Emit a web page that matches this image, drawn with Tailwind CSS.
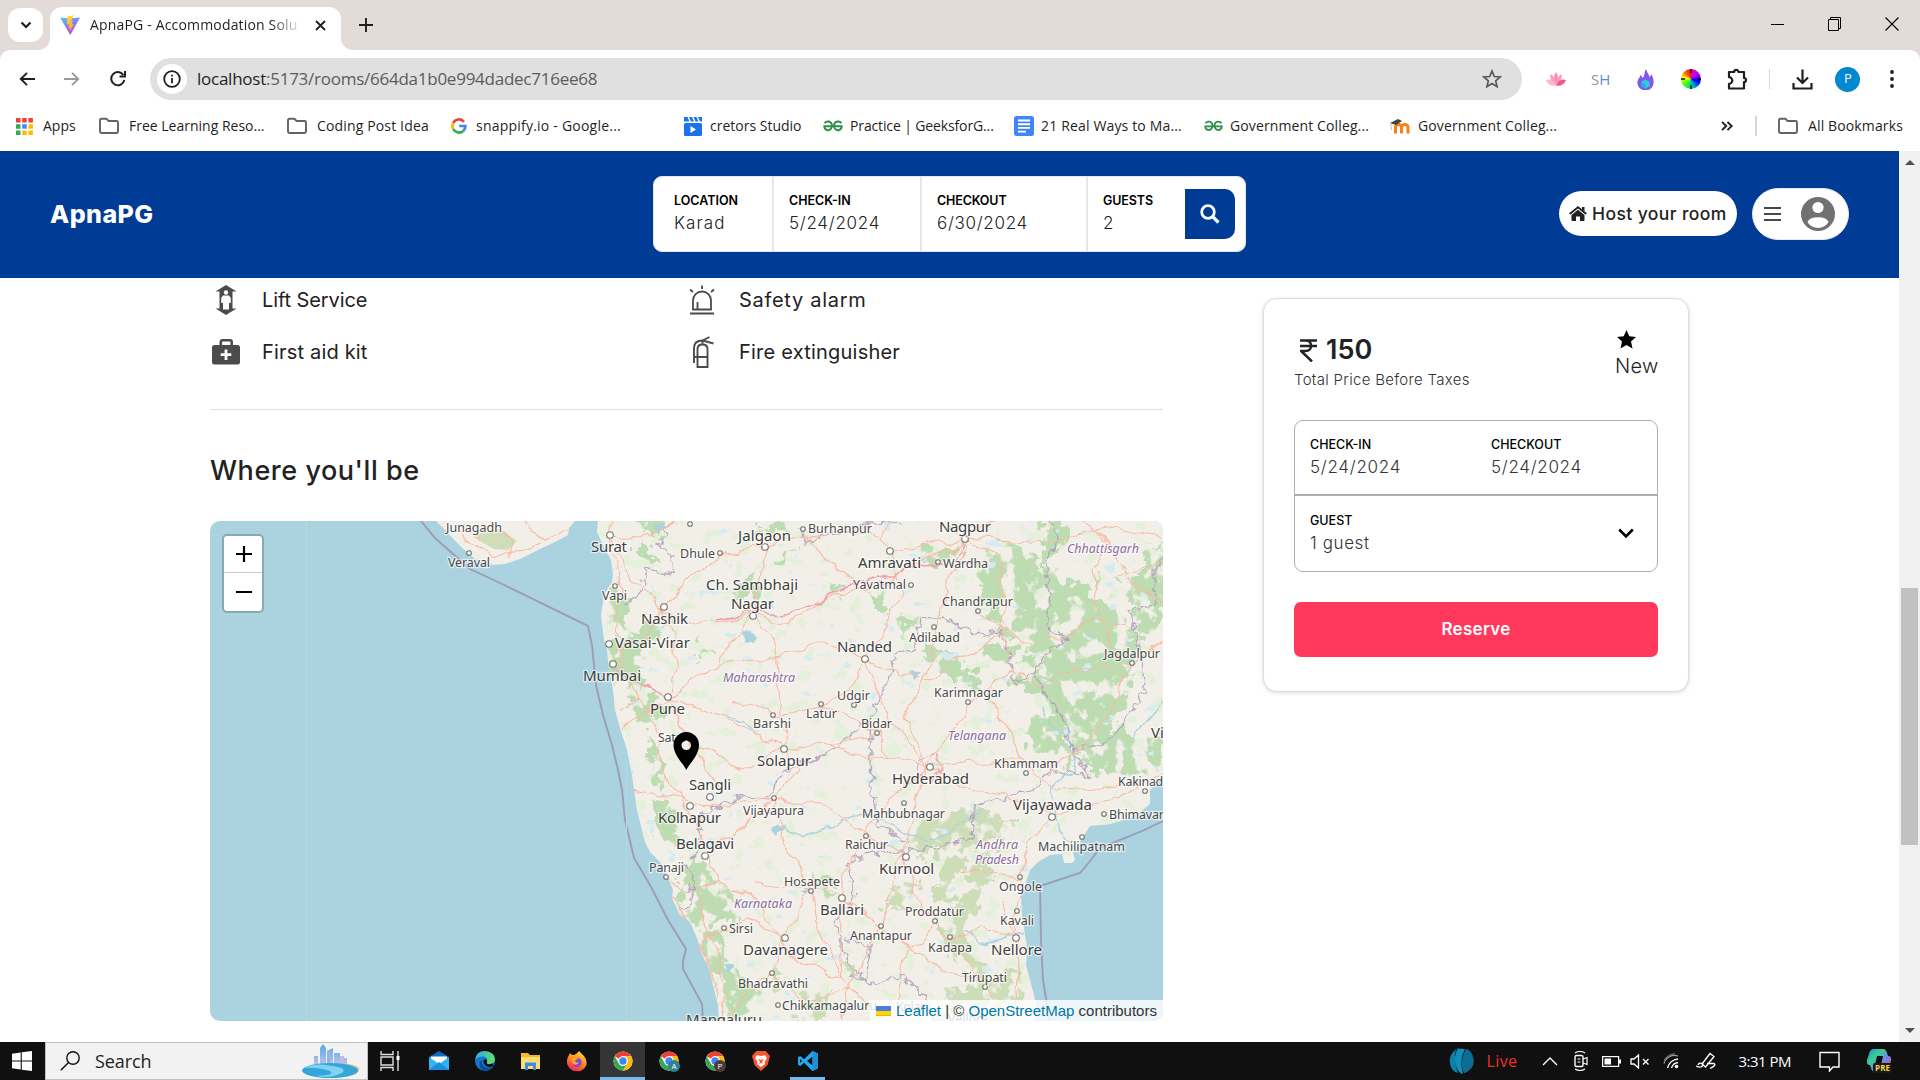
<!DOCTYPE html>
<html lang="en">
<head>
<meta charset="utf-8">
<title>ApnaPG - Accommodation Solution</title>
<script src="https://cdn.jsdelivr.net/npm/@tailwindcss/browser@4"></script>
</head>
<body class="w-[1920px] h-[1080px] overflow-hidden bg-white flex flex-col font-['Open_Sans',sans-serif] text-[#1f1f1f]">

<!-- icon symbols -->
<svg class="hidden">
  <symbol id="folder" viewBox="0 0 22 18"><path d="M2 3.2Q2 1.8 3.4 1.8H8.4L10.6 4H18.6Q20 4 20 5.4V14.6Q20 16 18.6 16H3.4Q2 16 2 14.6Z" fill="none" stroke="#606367" stroke-width="1.9"/></symbol>
  <symbol id="gfg" viewBox="0 0 20 12"><g fill="none" stroke="#2f8d46" stroke-width="1.9"><path d="M1.6 3.2C3 .8 7.600 .6 8.800 4.200C9.700 8 7 10.700 4.200 10.200C2.300 9.900 1.400 8.400 1.300 6.300H18.700C18.600 8.400 17.700 9.900 15.800 10.200C13 10.700 10.300 8 11.200 4.200C12.400 .6 17 .8 18.400 3.200"/></g></symbol>
  <symbol id="chrome" viewBox="0 0 48 48"><circle cx="24" cy="24" r="23" fill="#fff"/><path d="M24 1A23 23 0 0 1 43.900 12.500H24A11.500 11.500 0 0 0 14 18.300L4.100 12.500A23 23 0 0 1 24 1Z" fill="#ea4335"/><path d="M43.900 12.500A23 23 0 0 1 24 47L34 29.700A11.500 11.500 0 0 0 34 18.200L31 12.500Z" fill="#fbbc04"/><path d="M24 47A23 23 0 0 1 4.100 12.500L14 29.800A11.500 11.500 0 0 0 33.900 29.800Z" fill="#34a853"/><circle cx="24" cy="24" r="11" fill="#fff"/><circle cx="24" cy="24" r="8.800" fill="#4285f4"/></symbol>
</svg>

<!-- tab strip -->
<div class="h-[50px] shrink-0 bg-[#e3dbd8] flex items-start">
  <div class="ml-2 mt-2 w-[35px] h-[34px] rounded-[12px] bg-white flex items-center justify-center"><svg class="w-3 h-2" viewBox="0 0 12 8"><path d="M1.500 1.500L6 6L10.500 1.500" fill="none" stroke="#1f1f1f" stroke-width="2.200"/></svg></div>
  <div class="mt-[7px] h-[43px] w-[7px] relative"><svg class="absolute -left-[5px] bottom-0 w-3 h-3" viewBox="0 0 12 12"><path d="M12 0A12 12 0 0 1 0 12H12Z" fill="#fff"/></svg></div>
  <div class="mt-[7px] h-[43px] w-[291px] rounded-t-[12px] bg-white flex items-center pl-[10px] pb-[7px] relative">
    <svg class="w-5 h-5 shrink-0" viewBox="0 0 20 20"><defs><linearGradient id="v1" x1="0" y1="0" x2=".6" y2="1"><stop offset="0" stop-color="#41d1ff"/><stop offset="1" stop-color="#bd34fe"/></linearGradient><linearGradient id="v2" x1="0" y1="0" x2="0" y2="1"><stop offset="0" stop-color="#ffdf3a"/><stop offset="1" stop-color="#ff9a1f"/></linearGradient></defs><path d="M0 2.500L9.500 3.500L20 2.500L10.300 20Z" fill="url(#v1)"/><path d="M13.800 .2L7.200 1.500L6.700 9.500L9 9.200L8.300 13.200L10 12.800L9.500 17L14 9L11.500 9.500L13 6L11 6.200Z" fill="url(#v2)"/></svg>
    <div class="ml-[10px] w-[212px] shrink-0 whitespace-nowrap text-[14px] tracking-[0.17px] leading-5 mask-r-from-85%">ApnaPG - Accommodation Solu</div>
    <svg class="ml-[13px] w-[11px] h-[11px] shrink-0" viewBox="0 0 11 11"><path d="M1 1L10 10M10 1L1 10" stroke="#1f1f1f" stroke-width="1.800"/></svg>
    <svg class="absolute -right-3 bottom-0 w-3 h-3" viewBox="0 0 12 12"><path d="M0 0A12 12 0 0 0 12 12H0Z" fill="#fff"/></svg>
  </div>
  <svg class="ml-[18px] mt-[18px] w-[14px] h-[14px]" viewBox="0 0 14 14"><path d="M7 0V14M0 7H14" stroke="#1f1f1f" stroke-width="1.900"/></svg>
  <div class="ml-auto mr-[21px] mt-[17px] flex items-center gap-[43px]">
    <svg class="w-[14px] h-[14px]" viewBox="0 0 14 14"><path d="M0 7.500H13" stroke="#000"/></svg>
    <svg class="w-[14px] h-[14px]" viewBox="0 0 14 14"><path d="M.5 2.500H10.500V13.500H.5ZM2.500 2.500V.5H12.500V11.500H10.500" fill="none" stroke="#000"/></svg>
    <svg class="w-[14px] h-[14px]" viewBox="0 0 14 14"><path d="M.5 .5L13.500 13.500M13.500 .5L.5 13.500" stroke="#000" stroke-width="1.100"/></svg>
  </div>
</div>

<!-- toolbar -->
<div class="h-[58px] shrink-0 bg-[#e3dbd8]"><div class="h-full rounded-t-[10px] bg-white flex items-center pl-[19px]">
  <svg class="w-4 h-[14px]" viewBox="0 0 16 14"><path d="M16 7H2M8 .8L1.800 7L8 13.200" fill="none" stroke="#1f1f1f" stroke-width="1.900"/></svg>
  <svg class="ml-[29px] w-4 h-[14px]" viewBox="0 0 16 14"><path d="M0 7H14M8 .8L14.200 7L8 13.200" fill="none" stroke="#9a9a9a" stroke-width="1.900"/></svg>
  <svg class="ml-[29px] w-[18px] h-[18px]" viewBox="0 0 18 18"><path d="M15.300 9.800A6.600 6.600 0 1 1 14.300 5M16 1V6.500H10.500" fill="none" stroke="#1f1f1f" stroke-width="2"/></svg>
  <div class="ml-[23px] w-[1372px] h-[42px] rounded-full bg-[#e0e0e0] flex items-center pl-[7px] pr-5">
    <div class="w-[30px] h-[30px] rounded-full bg-white flex items-center justify-center"><svg class="w-[18px] h-[18px]" viewBox="0 0 18 18"><circle cx="9" cy="9" r="7.800" fill="none" stroke="#1f1f1f" stroke-width="1.800"/><path d="M9 8V13.200M9 4.800V6.600" stroke="#1f1f1f" stroke-width="1.800"/></svg></div>
    <div class="ml-[10px] text-[17px] leading-6 tracking-[-0.25px] whitespace-nowrap">localhost<span class="text-[#5c5c5c]">:5173/rooms/664da1b0e994dadec716ee68</span></div>
    <svg class="ml-auto w-5 h-5" viewBox="0 0 20 20"><path d="M10 2L12.300 7.500L18.200 8L13.700 11.900L15.100 17.700L10 14.600L4.900 17.700L6.300 11.900L1.800 8L7.700 7.500Z" fill="none" stroke="#5a5a5a" stroke-width="1.700"/></svg>
  </div>
  <svg class="ml-6 w-5 h-4" viewBox="0 0 20 16"><path d="M10 1Q14 6 10 14Q6 6 10 1Z" fill="#ff8fb1"/><path d="M4 3Q10 6 10 14Q4 12 4 3ZM16 3Q10 6 10 14Q16 12 16 3Z" fill="#ff9dbb"/><path d="M0 9Q6 7 10 14.500Q3 16 0 9Z" fill="#fcb7cb"/><path d="M20 9Q14 7 10 14.500Q17 16 20 9Z" fill="#f6558a"/></svg>
  <div class="ml-[25px] text-[15px] leading-5"><span class="text-[#8b97a3]">S</span><span class="text-[#5b94c9]">H</span></div>
  <svg class="ml-[27px] w-[17px] h-[21px]" viewBox="0 0 17 21"><path d="M9 0C10 4 12 5 12.500 8C13.500 7.500 14 6 14 5C16 8 17 11 16.500 14A8 7.300 0 0 1 .5 14C.2 10 3 9 3.500 6C5 7 5 8 5.500 9C8 7 7 3 9 0Z" fill="#8157ef"/><path d="M8.500 10.500L12.500 12.700V17.300L8.500 19.500L4.500 17.300V12.700Z" fill="#2cd3d3"/><path d="M4.500 12.700L8.500 15V19.500L4.500 17.300Z" fill="#25b3e0"/></svg>
  <div class="ml-[27px] w-5 h-5 rounded-full bg-[conic-gradient(#f08,#a0f_15%,#00f_30%,#09c_42%,#0e6_55%,#7f0_68%,#ff0_78%,#f60_88%,#f03)] flex items-center justify-center"><svg class="w-5 h-5" viewBox="0 0 20 20"><path d="M10 0V4M10 16V20M0 10H4M16 10H20" stroke="#111" stroke-width="1.500"/></svg></div>
  <svg class="ml-[25px] w-[22px] h-[22px]" viewBox="0 0 22 22"><path d="M3 4H8.200A2 2 0 1 1 12.400 4H18V10A2 2 0 1 1 18 14V20.500H3V15.800A3.300 3.300 0 0 0 3 9.200Z" fill="none" stroke="#1f1f1f" stroke-width="2.200" stroke-linejoin="round"/></svg>
  <div class="ml-[21px] w-px h-5 bg-[#ddd3d0]"></div>
  <svg class="ml-[22px] w-[21px] h-[21px]" viewBox="0 0 21 21"><path d="M10.500 .5V14M5 8.500L10.500 14L16 8.500M1.500 14V19.500H19.500V14" fill="none" stroke="#1f1f1f" stroke-width="2.200"/></svg>
  <div class="ml-[22px] w-[25px] h-[25px] rounded-full bg-[#0288d1] text-white text-[13px] flex items-center justify-center">P</div>
  <svg class="ml-[30px] w-1 h-[18px]" viewBox="0 0 4 18"><g fill="#1f1f1f"><circle cx="2" cy="2" r="1.900"/><circle cx="2" cy="9" r="1.900"/><circle cx="2" cy="16" r="1.900"/></g></svg>
</div></div>

<!-- bookmarks bar -->
<div class="h-[43px] shrink-0 flex items-center pb-[7px] pl-4 text-[14px] leading-5 whitespace-nowrap">
  <div class="w-[82px] flex items-center gap-[10px]"><svg class="w-[17px] h-[17px]" viewBox="0 0 17 17"><g fill="#ea4335"><path d="M0 0h4.500v4.500h-4.500zM6.200 0h4.500v4.500h-4.500zM12.400 0h4.500v4.500h-4.500z"/></g><path d="M0 6.200h4.500v4.500h-4.500zM0 12.400h4.500v4.500h-4.500z" fill="#34a853"/><path d="M6.200 6.200h4.500v4.500h-4.500z" fill="#4285f4"/><path d="M12.400 6.200h4.500v4.500h-4.500zM6.200 12.400h4.500v4.500h-4.500zM12.400 12.400h4.500v4.500h-4.500z" fill="#fbbc04"/></svg><span>Apps</span></div>
  <div class="w-[188px] flex items-center gap-[9px]"><svg class="w-[22px] h-[18px]"><use href="#folder"/></svg><span>Free Learning Reso...</span></div>
  <div class="w-[165px] flex items-center gap-[9px]"><svg class="w-[22px] h-[18px]"><use href="#folder"/></svg><span class="tracking-[0.15px]">Coding Post Idea</span></div>
  <div class="w-[233px] flex items-center gap-[9px]"><svg class="w-4 h-4" viewBox="0 0 16 16"><g fill="none" stroke-width="2.700"><path d="M13 3.800A6.500 6.500 0 0 0 2.200 5" stroke="#ea4335"/><path d="M2.200 5A6.500 6.500 0 0 0 2.200 11" stroke="#fbbc04"/><path d="M2.200 11A6.500 6.500 0 0 0 12.300 12.900" stroke="#34a853"/><path d="M12.300 12.900A6.500 6.500 0 0 0 14.400 8H8.200" stroke="#4285f4"/></g></svg><span class="tracking-[0.22px]">snappify.io - Google...</span></div>
  <div class="w-[139px] flex items-center gap-2"><svg class="w-[18px] h-5" viewBox="0 0 18 20"><rect y="7" width="18" height="13" rx="1.500" fill="#1a73e8"/><path d="M0 1H3.500L5.500 5.500H0ZM5 1H8L10 5.500H7ZM9.500 1H12.500L14.500 5.500H11.500ZM14 1H18V5.500H16Z" fill="#1a73e8"/><path d="M6.500 10V17L12 13.500Z" fill="#fff"/></svg><span>cretors Studio</span></div>
  <div class="w-[191px] flex items-center gap-[7px]"><svg class="w-5 h-3"><use href="#gfg"/></svg><span class="tracking-[-0.13px]">Practice | GeeksforG...</span></div>
  <div class="w-[190px] flex items-center gap-[7px]"><svg class="w-5 h-5" viewBox="0 0 20 20"><rect width="20" height="20" rx="2.500" fill="#4285f4"/><path d="M4 4.500H16M4 8.200H16M4 11.900H16M4 15.600H12" stroke="#fff" stroke-width="1.900"/></svg><span class="tracking-[0.16px]">21 Real Ways to Ma...</span></div>
  <div class="w-[186px] flex items-center gap-[7px]"><svg class="w-[19px] h-3"><use href="#gfg"/></svg><span class="tracking-[0.12px]">Government Colleg...</span></div>
  <div class="flex items-center gap-2"><svg class="w-5 h-[15px]" viewBox="0 0 20 15"><path d="M5.500 14.500V8Q6 5.500 8.500 5.500T11.500 8V14.500M11.500 8Q12 5.500 14.800 5.500T18 8V14.500" fill="none" stroke="#f98012" stroke-width="3"/><path d="M0 4L8 0L12 2L6 6Z" fill="#444"/><path d="M1 4Q.5 8 1.500 11" fill="none" stroke="#c99" stroke-width=".8"/></svg><span class="tracking-[0.12px]">Government Colleg...</span></div>
  <svg class="ml-auto w-3 h-[10px]" viewBox="0 0 12 10"><path d="M1 .8L5.200 5L1 9.200M6.500 .8L10.700 5L6.500 9.200" fill="none" stroke="#1f1f1f" stroke-width="1.900"/></svg>
  <div class="ml-[22px] w-[2px] h-5 bg-[#ddd3d0]"></div>
  <div class="ml-5 mr-[17px] flex items-center gap-[9px]"><svg class="w-[22px] h-[18px]"><use href="#folder"/></svg><span class="tracking-[0.13px]">All Bookmarks</span></div>
</div>

<!-- page viewport -->
<div class="h-[891px] shrink-0 flex">
<div class="w-[1899px] flex flex-col font-[Inter,sans-serif] text-[#222]">

  <header class="h-[127px] shrink-0 bg-[#003b95] flex items-center pb-[2px]">
    <div class="w-[653px] pl-[50px] text-[25px] leading-8 font-extrabold tracking-[0.45px] text-white whitespace-nowrap">ApnaPG</div>
    <div class="w-[593px] h-[76px] rounded-[9px] border border-gray-200 bg-white flex text-[17px] leading-6 font-light">
      <div class="w-[120px] border-r-2 border-gray-200 pl-5 pt-[14px]"><div class="text-[12.5px] leading-5 font-semibold text-black">LOCATION</div><span class="tracking-[1.1px]">Karad</span></div>
      <div class="w-[148px] border-r-2 border-gray-200 pl-[15px] pt-[14px]"><div class="text-[12.5px] leading-5 font-semibold text-black">CHECK-IN</div><span class="tracking-[0.72px]">5/24/2024</span></div>
      <div class="w-[166px] border-r-2 border-gray-200 pl-[15px] pt-[14px]"><div class="text-[12.5px] leading-5 font-semibold text-black tracking-[-0.15px]">CHECKOUT</div><span class="tracking-[0.7px]">6/30/2024</span></div>
      <div class="w-[97px] pl-[15px] pt-[14px]"><div class="text-[12.5px] leading-5 font-semibold text-black tracking-[-0.1px]">GUESTS</div><span>2</span></div>
      <div class="mt-3 w-[50px] h-[50px] rounded-r-[10px] bg-[#003b95] flex items-center justify-center"><svg class="w-5 h-5" viewBox="0 0 20 20"><circle cx="8" cy="8" r="6.300" fill="none" stroke="#fff" stroke-width="2.800"/><path d="M12.500 12.500L18.500 18.500" stroke="#fff" stroke-width="3.200"/></svg></div>
    </div>
    <div class="ml-[313px] w-[178px] h-[45px] rounded-full bg-white flex items-center pl-[10px] gap-[5px] text-[17.500px] leading-6 font-medium tracking-[0.4px] whitespace-nowrap">
      <svg class="w-[18px] h-[15px]" viewBox="0 0 18 15"><path d="M9 3.700L15.500 9V14.300Q15.500 15 14.800 15H11V10.500H7V15H3.200Q2.500 15 2.500 14.300V9Z" fill="#222"/><path d="M.7 8L9 1.200L17.300 8" fill="none" stroke="#222" stroke-width="1.800"/><path d="M13 1H15.500V5.500L13 3.500Z" fill="#222"/></svg>
      <span>Host your room</span>
    </div>
    <div class="ml-[15px] w-[97px] h-[52px] rounded-full border border-gray-200 bg-white flex items-center pl-[11px]">
      <svg class="w-[17px] h-[14px]" viewBox="0 0 17 14"><path d="M0 1H17M0 7H17M0 13H17" stroke="#484848" stroke-width="2"/></svg>
      <svg class="ml-5 w-[34px] h-[34px]" viewBox="0 0 34 34"><circle cx="17" cy="17" r="17" fill="#717171"/><circle cx="17" cy="10.500" r="5.600" fill="#fff"/><path d="M6.500 25.300Q8 20.200 17 20.200T27.500 25.300Q23.500 31 17 31T6.500 25.300Z" fill="#fff"/></svg>
    </div>
  </header>

  <main class="flex pl-[210px]">
    <section class="w-[953px]">
      <div class="flex h-[44px] items-center text-[20px] leading-7">
        <div class="w-[477px] flex items-center pl-[5px]"><svg class="w-[22px] h-[30px]" viewBox="0 0 22 30"><path d="M11 0L21.500 6.500H17.500V23.500H21.500L11 30L.5 23.500H4.500V6.500H.5Z" fill="#4b4b4b"/><circle cx="11" cy="7.500" r="2.200" fill="#fff"/><path d="M8 10.500H14L15.800 13V18H14V24.500H8V18H6.200V13Z" fill="#fff"/></svg><span class="ml-[25px] tracking-[-0.1px]">Lift Service</span></div>
        <div class="flex items-center pl-[2px]"><svg class="w-[26px] h-[30px]" viewBox="0 0 26 30"><path d="M4 24.500V15.500A9 9 0 0 1 22 15.500V24.500ZM1 28.500H25M13 .5V4M1 4.500L4 7M25 4.500L22 7M8.500 17V24" fill="none" stroke="#4b4b4b" stroke-width="1.800"/></svg><span class="ml-6 tracking-[0.7px]">Safety alarm</span></div>
      </div>
      <div class="flex h-[60px] items-center text-[20px] leading-7">
        <div class="w-[477px] flex items-center pl-[2px]"><svg class="w-[28px] h-[26px]" viewBox="0 0 28 26"><path d="M8.800 6V3Q8.800 1.300 10.500 1.300H18Q19.700 1.300 19.700 3V6" fill="none" stroke="#4b4b4b" stroke-width="2.600"/><rect y="6" width="28" height="19.500" rx="2.500" fill="#4b4b4b"/><path d="M14 10.500V21M8.700 15.700H19.300" stroke="#fff" stroke-width="2.800"/></svg><span class="ml-[22px] tracking-[0.18px]">First aid kit</span></div>
        <div class="flex items-center pl-[5px]"><svg class="w-[24px] h-[32px]" viewBox="0 0 24 32"><path d="M5.500 31V13Q5.500 8.500 10.500 8.500T15.500 13V31ZM5.500 21H15.500M2 27V12Q2 4.500 10.500 4.500L17.500 1M10.500 4.500L21.500 7.500M10.500 4.500V8.500M2 21H5.500" fill="none" stroke="#4b4b4b" stroke-width="1.900"/></svg><span class="ml-[23px] tracking-[0.22px]">Fire extinguisher</span></div>
      </div>
      <div class="mt-[27px] h-px bg-[#dfdfdf]"></div>
      <h2 class="mt-[43px] text-[27px] leading-9 font-medium tracking-[0.54px]">Where you'll be</h2>

      <!-- map -->
      <div class="mt-[32px] w-[953px] h-[500px] rounded-[10px] overflow-hidden relative bg-[#aad3df]">
        <svg class="w-[953px] h-[500px] block" viewBox="210 521 953 500">
          <defs>
            <clipPath id="land"><path d="M436 521L446 531L460 546L475 559L493 565L505 564L520 559L538 550L555 542L568 535L569 528L575 521ZM598 521L597 532L603 545L611 560L613 575L612 582L604 595L601 615L604 640L607 650L609 668L613 690L615 710L620 728L627 750L632 775L634 790L637 810L645 842L650 852L660 862L667 875L673 890L672 898L680 915L690 922L697 938L702 955L710 970L713 985L718 1005L719 1021H1034L1036 1005L1034 995L1030 980L1026 965L1027 947L1025 935L1022 915L1021 897L1025 885L1030 870L1038 862L1050 855L1062 854L1064 863H1072L1075 860L1073 853L1081 840L1090 826L1110 824L1127 819L1140 812L1150 804L1150 790L1163 776V521Z"/></clipPath>
            <filter id="forest" x="590" y="515" width="580" height="510" filterUnits="userSpaceOnUse"><feTurbulence type="fractalNoise" baseFrequency=".07" numOctaves="4" seed="4" result="n"/><feDisplacementMap in="SourceGraphic" in2="n" scale="30" xChannelSelector="R" yChannelSelector="G" result="d"/><feTurbulence type="fractalNoise" baseFrequency=".06 .05" numOctaves="4" seed="11" result="m"/><feColorMatrix in="m" values="0 0 0 0 0 0 0 0 0 0 0 0 0 0 0 10 0 0 0 -3.700" result="k"/><feComposite in="d" in2="k" operator="in"/></filter>
            <filter id="speck" x="590" y="515" width="580" height="510" filterUnits="userSpaceOnUse"><feTurbulence type="fractalNoise" baseFrequency=".06 .07" numOctaves="4" seed="23"/><feColorMatrix values="0 0 0 0 .78 0 0 0 0 .87 0 0 0 0 .70 0 18 0 0 -11.200"/></filter>
            <filter id="lakes" x="590" y="515" width="580" height="510" filterUnits="userSpaceOnUse"><feTurbulence type="fractalNoise" baseFrequency=".05 .08" numOctaves="3" seed="41"/><feColorMatrix values="0 0 0 0 .66 0 0 0 0 .83 0 0 0 0 .88 0 0 18 0 -13"/></filter>
            <filter id="wob" x="420" y="515" width="760" height="510" filterUnits="userSpaceOnUse"><feTurbulence type="fractalNoise" baseFrequency=".035" numOctaves="3" seed="7"/><feDisplacementMap in="SourceGraphic" scale="18" xChannelSelector="R" yChannelSelector="G"/></filter>
            <filter id="jag" x="420" y="515" width="760" height="510" filterUnits="userSpaceOnUse"><feTurbulence type="fractalNoise" baseFrequency=".12" numOctaves="2" seed="3"/><feDisplacementMap in="SourceGraphic" scale="12" xChannelSelector="R" yChannelSelector="G"/></filter>
          </defs>
          <g clip-path="url(#land)">
            <rect x="420" y="521" width="743" height="500" fill="#f2efe9"/>
            <rect x="590" y="521" width="573" height="500" filter="url(#speck)"/>
            <g filter="url(#forest)" fill="#bedcb1">
              <path d="M636 515L668 520L662 535L640 528ZM608 590L630 600L622 640L640 625L668 618L650 650L636 670L650 690L668 720L640 725L632 700L612 690L610 640ZM650 730L662 760L668 790L658 800L650 760ZM650 800L672 806L680 840L690 860L670 852L660 830ZM684 868L702 862L718 880L738 900L730 920L700 930L682 915L680 885ZM700 930L720 935L722 960L740 975L760 990L752 1015L730 1021L720 990L708 960Z"/>
              <path d="M1035 520L1070 520L1062 545L1045 560L1075 590L1100 570L1090 600L1120 640L1135 620L1140 560L1165 540V620L1140 640L1130 690L1110 730L1165 740V770L1130 780L1100 770L1075 745L1060 790L1070 740L1050 710L1030 690L1010 680L1030 650L1010 630L1005 600L1020 570L1045 575ZM990 540L1015 545L1040 560L1025 600L1010 640L990 620L980 590ZM920 545L960 550L950 565L920 560ZM985 575L1010 580L1000 600L980 595ZM895 615L920 622L905 640ZM925 645L960 655L985 690L960 685L925 665ZM990 640L1015 650L1010 675L985 665ZM1085 590L1120 610L1125 650L1100 680L1060 660L1065 620ZM1030 715L1070 720L1065 755L1030 745ZM1120 570L1165 580V610L1130 605ZM1090 750L1160 745L1150 775L1090 770Z"/>
              <path d="M920 820L980 805L1015 825L1000 840L960 845L930 855L905 850ZM935 855L965 855L960 905L935 900ZM970 860L995 850L980 900L960 930L975 960L995 975L980 1000L955 960L940 930L960 905ZM890 890L920 880L905 910L885 905ZM945 990L990 985L1015 965L1020 1000L1000 1021L940 1021ZM800 1000L830 990L820 1021H795ZM770 970L790 975L780 985ZM840 960L860 955L855 975Z" fill="#cdddb8"/>
              <path d="M735 580L760 575L765 600L740 598ZM690 640L715 650L700 660ZM830 580L850 585L840 600ZM870 590L890 600L885 615ZM775 555L800 545L770 570ZM640 540L660 560L640 560ZM810 870L835 890L825 905ZM760 525L790 522L785 535L755 535Z"/>
            </g>
            <path d="M476 534L502 530L517 541L508 550L494 549L480 541Z" fill="#cfdeb8"/>
            <rect x="590" y="521" width="573" height="500" filter="url(#lakes)"/>
            <g filter="url(#wob)" fill="#aad3df" stroke="#aad3df">
              <path d="M740 630L752 638L750 644L744 638ZM772 828L784 826L776 834ZM908 670L922 672L915 680ZM655 525L668 521L660 536ZM722 966L732 970L728 976ZM802 895L810 890L806 898Z"/>
              <path d="M1044 706C1050 725 1065 730 1070 750S1080 770 1060 780S1055 820 1070 850M725 715L745 722L752 730M780 826C800 838 825 832 840 820S880 815 900 830S930 850 985 810M960 930L985 945L1025 932M1130 740L1165 700" fill="none" stroke-width="1.400"/>
            </g>
            <!-- state borders -->
            <g filter="url(#jag)" fill="none" stroke="#ab98b8" stroke-width="1.500" opacity=".8">
              <path d="M672 521L660 545L672 555L671 575L645 568L642 590L625 605M800 528L805 542L830 535L870 523L905 522M1050 521L1058 540L1045 560L1050 600L1045 625L1066 640L1050 650L1035 672L1015 682L1008 655L1000 632L975 635L950 620L920 618L915 650L895 655L890 680L880 695L870 720L850 735L830 750L812 760L778 775L772 795L740 798L715 808L700 815L698 850L690 860M1035 672L1045 695L1065 720L1072 750L1100 745L1120 730L1145 690L1143 660L1135 630L1128 610L1155 605L1153 570L1165 560M1072 750L1090 775L1050 770L1035 790L975 805L972 838L920 850L860 855L848 865L855 900L835 920L845 960L870 985L900 975L925 995L935 1021M870 720L872 790L878 825L905 840M682 862L695 875L690 905L680 912M845 940L870 945L868 980L850 975"/>
            </g>
            <!-- roads -->
            <g filter="url(#wob)" fill="none" stroke="#fbb8a2" stroke-width="1.100">
              <path d="M452 521L470 545L500 558L540 542M490 521L515 545L510 560M520 521L545 540L570 530M462 521L480 540M610 515V535L614 560L622 610L618 655L640 700L662 735L660 760L666 780L690 810L705 856L720 880L745 890L780 935L800 960L842 980L880 1021M610 540L650 538L680 521M610 535L630 580L664 607M664 607L690 580L720 553L765 547L805 535L870 530L890 550L965 538L1045 543L1110 530L1165 540M664 607L640 640L614 650M664 607L700 625L752 616L790 625L820 600L870 590L920 560L965 540M664 607L680 660L668 697M668 697L716 665L752 616M668 697L720 715L784 748L830 745L890 757L930 767L990 760L1025 760L1060 790L1145 780M668 697L690 740L740 770L784 748M668 697L620 730M765 547L752 616L776 650L780 700L784 748M805 535L820 560L870 590M890 550L900 600L880 640L865 659M865 659L820 640L790 655L716 665M865 659L850 690L822 705L773 715L730 700M865 659L890 720L930 767M965 540L950 580L935 625L925 680L905 720L930 767M965 540L1000 560L1005 610L1000 635L1010 660M978 610L1020 640L1060 640L1090 620L1130 625M930 767L910 810L905 857L890 900L881 925L850 990L842 1021M930 767L980 790L1020 800L1053 815L1110 800L1165 770M930 767L968 703L1010 670L1040 685L1080 670L1130 665L1165 640M1132 663L1110 710L1080 750L1050 770M1080 521L1110 545L1140 590L1165 610M1110 545L1090 570L1100 620L1120 660M1053 815L1030 840L1020 877L1017 910L1016 938L1020 980L1015 1021M1016 938L980 930L950 937L920 910L905 857M950 937L985 985L1000 1010M985 985L940 970L881 925M784 748L800 770L774 798L780 830L800 870L811 890L820 930L842 980M774 798L725 804L690 805M774 798L830 810L866 836L905 857M705 856L740 830L774 798M842 898L811 890L750 885M842 898L850 860L866 836L890 800L930 767M842 898L881 925M785 938L750 920L724 928L700 945M785 938L772 972L730 1010M785 938L811 890M842 898L840 940L842 980M720 880L690 895L664 876M700 900L715 950L725 1000L728 1021M772 972L800 1000L850 990M877 733L830 745M821 704L877 733L890 757M664 876L690 930L710 965L722 1021M640 700L620 710M690 740L720 790M633 790L690 800M1165 560L1120 575M1000 635L930 680L865 659M990 700L1025 760M1000 900L1016 938M960 870L1020 877M935 921L905 960L900 1021M890 521L880 540M940 521L965 538M1000 521L965 538"/>
              <path d="M717 620L753 613L790 615L820 600L870 580L920 566M641 684L668 697M920 566L948 562L962 542" stroke="#f29cac" stroke-width="1.400"/>
              <path d="M612 666L640 684M920 760L940 753L943 770L930 780L918 772Z" stroke="#f2a0b5"/>
            </g>
          </g>
          <path d="M421 521L435 538L452 553L470 569L500 583L588 626L592 645L596 685L603 715L612 745L618 770L622 790L625 820L634 858L650 885L668 920L686 949L683 961V969L702 1004L703 1021M1163 821L1140 832L1100 848L1087 865L1080 873L1040 886L1041 940L1043 980L1047 1005L1049 1021" fill="none" stroke="#9d9cb7" stroke-width="1.900"/>
          <path d="M306.500 521V1021M626.500 760V1021" stroke="#b5d8e2"/>
          <!-- town markers -->
          <g fill="#fff" stroke="#73716b" stroke-width="1.100">
            <g><circle cx="610" cy="535" r="3.300"/><circle cx="664" cy="607" r="3.300"/><circle cx="609" cy="644" r="3.300"/><circle cx="613" cy="664" r="3.300"/><circle cx="668" cy="697" r="3.300"/><circle cx="765" cy="547" r="3.300"/><circle cx="753" cy="616" r="3.300"/><circle cx="890" cy="551" r="3.300"/><circle cx="865" cy="659" r="3.300"/><circle cx="784" cy="749" r="3.300"/><circle cx="965" cy="539" r="3.300"/><circle cx="930" cy="767" r="3.300"/><circle cx="710" cy="797" r="3.300"/><circle cx="690" cy="806" r="3.300"/><circle cx="705" cy="856" r="3.300"/><circle cx="906" cy="857" r="3.300"/><circle cx="1052" cy="817" r="3.300"/><circle cx="842" cy="898" r="3.300"/><circle cx="785" cy="938" r="3.300"/><circle cx="1016" cy="938" r="3.300"/></g>
            <g><circle cx="469" cy="553" r="2.300"/><circle cx="615" cy="586" r="2.300"/><circle cx="690" cy="524" r="2.300"/><circle cx="720" cy="553" r="2.300"/><circle cx="803" cy="529" r="2.300"/><circle cx="911" cy="585" r="2.300"/><circle cx="938" cy="562" r="2.300"/><circle cx="978" cy="611" r="2.300"/><circle cx="934" cy="627" r="2.300"/><circle cx="1132" cy="663" r="2.300"/><circle cx="968" cy="702" r="2.300"/><circle cx="773" cy="715" r="2.300"/><circle cx="821" cy="704" r="2.300"/><circle cx="854" cy="705" r="2.300"/><circle cx="877" cy="733" r="2.300"/><circle cx="1026" cy="773" r="2.300"/><circle cx="774" cy="798" r="2.300"/><circle cx="866" cy="836" r="2.300"/><circle cx="904" cy="803" r="2.300"/><circle cx="1145" cy="791" r="2.300"/><circle cx="1104" cy="814" r="2.300"/><circle cx="1082" cy="837" r="2.300"/><circle cx="666" cy="877" r="2.300"/><circle cx="811" cy="891" r="2.300"/><circle cx="724" cy="928" r="2.300"/><circle cx="772" cy="973" r="2.300"/><circle cx="778" cy="1005" r="2.300"/><circle cx="881" cy="926" r="2.300"/><circle cx="935" cy="921" r="2.300"/><circle cx="950" cy="937" r="2.300"/><circle cx="1020" cy="877" r="2.300"/><circle cx="1017" cy="911" r="2.300"/><circle cx="985" cy="987" r="2.300"/></g>
          </g>
          <!-- labels -->
          <g class="font-['Noto_Sans',sans-serif]" stroke="#fff" stroke-opacity=".65" stroke-width="2.600" paint-order="stroke" stroke-linejoin="round">
            <g font-size="15" fill="#3f3f3f">
              <text x="591" y="552" textLength="36">Surat</text><text x="641" y="624" textLength="47">Nashik</text><text x="615" y="648" textLength="75">Vasai-Virar</text><text x="583" y="681" textLength="58">Mumbai</text><text x="650" y="714" textLength="35">Pune</text><text x="738" y="541" textLength="53">Jalgaon</text><text x="858" y="568" textLength="63">Amravati</text><text x="706" y="590" textLength="92">Ch. Sambhaji</text><text x="731" y="609" textLength="43">Nagar</text><text x="837" y="652" textLength="55">Nanded</text><text x="757" y="766" textLength="54">Solapur</text><text x="939" y="532" textLength="52">Nagpur</text><text x="1151" y="738">Vi</text><text x="892" y="784" textLength="77">Hyderabad</text><text x="689" y="790" textLength="42">Sangli</text><text x="658" y="823" textLength="63">Kolhapur</text><text x="676" y="849" textLength="58">Belagavi</text><text x="879" y="874" textLength="55">Kurnool</text><text x="1013" y="810" textLength="79">Vijayawada</text><text x="820" y="915" textLength="44">Ballari</text><text x="743" y="955" textLength="85">Davanagere</text><text x="991" y="955" textLength="51">Nellore</text><text x="686" y="1025" textLength="76">Mangaluru</text>
            </g>
            <g font-size="12.500" fill="#4a4a4a">
              <text x="446" y="532" textLength="56">Junagadh</text><text x="448" y="567" textLength="42">Veraval</text><text x="602" y="600" textLength="25">Vapi</text><text x="658" y="742" textLength="36">Satara</text><text x="680" y="558" textLength="35">Dhule</text><text x="808" y="533" textLength="64">Burhanpur</text><text x="853" y="589" textLength="53">Yavatmal</text><text x="837" y="700" textLength="33">Udgir</text><text x="806" y="718" textLength="31">Latur</text><text x="753" y="728" textLength="38">Barshi</text><text x="861" y="728" textLength="31">Bidar</text><text x="943" y="568" textLength="45">Wardha</text><text x="942" y="606" textLength="71">Chandrapur</text><text x="909" y="642" textLength="51">Adilabad</text><text x="1104" y="658" textLength="56">Jagdalpur</text><text x="934" y="697" textLength="69">Karimnagar</text><text x="994" y="768" textLength="64">Khammam</text><text x="1118" y="786" textLength="52">Kakinada</text><text x="649" y="872" textLength="35">Panaji</text><text x="743" y="815" textLength="61">Vijayapura</text><text x="862" y="818" textLength="83">Mahbubnagar</text><text x="845" y="849" textLength="43">Raichur</text><text x="1109" y="819" textLength="73">Bhimavaram</text><text x="1038" y="851" textLength="87">Machilipatnam</text><text x="999" y="891" textLength="43">Ongole</text><text x="784" y="886" textLength="56">Hosapete</text><text x="729" y="933" textLength="24">Sirsi</text><text x="905" y="916" textLength="59">Proddatur</text><text x="928" y="952" textLength="44">Kadapa</text><text x="1000" y="925" textLength="34">Kavali</text><text x="850" y="940" textLength="62">Anantapur</text><text x="962" y="982" textLength="45">Tirupati</text><text x="738" y="988" textLength="70">Bhadravathi</text><text x="782" y="1010" textLength="95">Chikkamagaluru</text><text x="896" y="1011" textLength="29">Kolar</text><text x="948" y="1023" textLength="40">Vellore</text>
            </g>
            <g font-size="12.500" font-style="italic" fill="#8d6a9f">
              <text x="723" y="682" textLength="72">Maharashtra</text><text x="1067" y="553" textLength="72">Chhattisgarh</text><text x="948" y="740" textLength="58">Telangana</text><text x="976" y="849" textLength="42">Andhra</text><text x="975" y="864" textLength="44">Pradesh</text><text x="734" y="908" textLength="58">Karnataka</text>
            </g>
          </g>
          <!-- location pin -->
          <path fill-rule="evenodd" d="M686.300 770C683 763 673.500 755 673.500 745A12.700 13 0 0 1 699 745C699 755 690 763 686.300 770ZM686.300 740.500A4.800 4.800 0 1 0 686.300 750.100A4.800 4.800 0 1 0 686.300 740.500Z"/>
        </svg>
        <div class="absolute left-[12px] top-[13px] w-[42px] h-[79px] rounded-[5px] border-2 border-black/20 bg-white bg-clip-padding flex flex-col">
          <div class="h-[37px] border-b border-[#ccc] flex items-center justify-center pl-px"><svg class="w-4 h-4" viewBox="0 0 16 16"><path d="M8 0V16M0 8H16" stroke="#000" stroke-width="2.200"/></svg></div>
          <div class="h-[38px] flex items-center justify-center pl-px"><svg class="w-4 h-4" viewBox="0 0 16 16"><path d="M0 8H16" stroke="#000" stroke-width="2"/></svg></div>
        </div>
        <div class="absolute right-0 bottom-0 w-[293px] h-[21px] bg-white/80 flex items-center pl-[6px] text-[15px] leading-5 whitespace-nowrap font-['Liberation_Sans',sans-serif] text-[#333]">
          <svg class="w-[15px] h-[10px] mr-[5px]" viewBox="0 0 15 10"><path fill="#4c7be1" d="M0 0H15V5H0Z"/><path fill="#ffd500" d="M0 5H15V9H0Z"/><path fill="#e0bc00" d="M0 9H15V10H0Z"/></svg>
          <span><span class="text-[#0078a8]">Leaflet</span> | © <span class="text-[#0078a8]">OpenStreetMap</span> contributors</span>
        </div>
      </div>
    </section>

    <aside class="ml-[100px] mt-5 w-[426px] h-[394px] rounded-[14px] border border-[#dddddd] shadow-[0_1px_4px_rgba(0,0,0,.14)] px-[30px] pt-[31px] bg-white flex flex-col">
      <div class="h-[90px] shrink-0 flex justify-between">
        <div>
          <div class="mt-[2px] pl-[6px] flex items-center text-[27px] leading-9 font-semibold"><svg class="w-[17px] h-[23px] mr-[9px]" viewBox="0 0 17 23"><path d="M0 1.500H17M0 7H17M0 1.500H5.500C13 1.500 13 12 5.500 12H1L12 22.500" fill="none" stroke="#222" stroke-width="2.500"/></svg><span>150</span></div>
          <div class="text-[15px] leading-6 font-light tracking-[0.3px] text-[#333]">Total Price Before Taxes</div>
        </div>
        <div class="w-[43px]"><svg class="ml-[2px] w-[19px] h-[19px]" viewBox="0 0 19 19"><path d="M9.500 0L12.300 6.300L19 7L14 11.600L15.500 18.500L9.500 15L3.500 18.500L5 11.600L0 7L6.700 6.300Z"/></svg><div class="mt-px text-[20px] leading-8 font-light tracking-[0.3px]">New</div></div>
      </div>
      <div class="h-[152px] shrink-0 rounded-[9px] border border-[#b0b0b0] text-[17px] leading-6 font-light text-[#333]">
        <div class="h-[75px] border-b-2 border-[#b0b0b0] flex pl-[15px] pt-[14px]">
          <div class="w-[181px]"><div class="text-[12.500px] leading-5 font-medium text-black">CHECK-IN</div><span class="tracking-[0.72px]">5/24/2024</span></div>
          <div><div class="text-[12.500px] leading-5 font-medium text-black">CHECKOUT</div><span class="tracking-[0.7px]">5/24/2024</span></div>
        </div>
        <div class="flex pl-[15px] pr-[23px] pt-[15px] justify-between">
          <div><div class="text-[12.500px] leading-5 font-medium text-black">GUEST</div><span class="tracking-[0.6px]">1 guest</span></div>
          <svg class="mt-[17px] w-4 h-[11px]" viewBox="0 0 16 11"><path d="M1.200 1.500L8 8.300L14.800 1.500" fill="none" stroke="#000" stroke-width="2.600"/></svg>
        </div>
      </div>
      <button class="mt-[30px] h-[55px] shrink-0 rounded-[7px] bg-[#ff385c] text-white text-[17px] leading-6 font-semibold tracking-[0.3px] pb-[2px]">Reserve</button>
    </aside>
  </main>
</div>

<!-- scrollbar -->
<div class="w-[21px] h-full bg-[#f1f1f1] flex flex-col items-center justify-between py-[9px] relative">
  <svg class="w-[10px] h-[5px]" viewBox="0 0 10 5"><path d="M0 5L5 0L10 5Z" fill="#505050"/></svg>
  <div class="absolute left-[2px] top-[437px] w-[17px] h-[257px] bg-[#c1c1c1]"></div>
  <svg class="w-[10px] h-[5px]" viewBox="0 0 10 5"><path d="M0 0L5 5L10 0Z" fill="#505050"/></svg>
</div>
</div>

<!-- taskbar -->
<div class="h-[38px] shrink-0 bg-[#101010] flex items-center text-white">
  <div class="w-[45px] pl-3"><svg class="w-5 h-5" viewBox="0 0 20 20"><path d="M0 2.800L8.700 1.500V9.500H0ZM9.800 1.300L20 0V9.500H9.800ZM0 10.500H8.700V18.500L0 17.200ZM9.800 10.500H20V20L9.800 18.700Z" fill="#fff"/></svg></div>
  <div class="w-[323px] h-[38px] bg-[#f2f2f2] border border-[#bfbfbf] flex items-center pl-[14px] pr-[7px] text-[#222] text-[18px]">
    <svg class="w-5 h-5" viewBox="0 0 20 20"><circle cx="13" cy="7" r="6.200" fill="none" stroke="#111" stroke-width="1.400"/><path d="M8.500 11.500L.8 19.300" stroke="#111" stroke-width="1.500"/></svg>
    <span class="ml-[15px] tracking-[-0.1px]">Search</span>
    <svg class="ml-auto w-[58px] h-[34px]" viewBox="0 0 58 34"><defs><linearGradient id="bl" x1="0" y1="0" x2="0" y2="1"><stop offset="0" stop-color="#5aa7e8"/><stop offset="1" stop-color="#b9c6ee"/></linearGradient></defs><path d="M30 20Q50 18 57 24Q58 32 40 33Z" fill="#e3b98b"/><path d="M12 22V12H16V22ZM18 22V4L21 0L24 4V22ZM25 22V7L31 4V22ZM32 22V9H38V22ZM39 22V14H45V22Z" fill="url(#bl)"/><path d="M25 7L28 5.500V22H25Z" fill="#8fb4ec"/><path d="M38 12H42V22H38Z" fill="#cbb8e0"/><ellipse cx="28" cy="26.500" rx="28" ry="7.500" fill="#35a6d9"/><path d="M1 24Q14 18 30 22Q46 24 40 29Q28 35 14 32Q34 31 28 27Q16 23 1 24Z" fill="#7fd3ef"/></svg>
  </div>
  <svg class="ml-3 w-5 h-5" viewBox="0 0 20 20"><path d="M1 0V3.500H13V0M1 6H13V14H1ZM1 20V16.500H13V20M18 0V20" fill="none" stroke="#ddd" stroke-width="1.400"/><path d="M16.500 5H19.500V9H16.500Z" fill="#fff"/></svg>
  <svg class="ml-[29px] w-5 h-5" viewBox="0 0 20 20"><path d="M0 6L10 0L20 6V19H0Z" fill="#0f6cbd"/><path d="M2 5.500H18V14H2Z" fill="#fff"/><path d="M0 6L10 13L20 6V19H0Z" fill="#35b1f3"/><path d="M0 19L10 11L20 19Z" fill="#1b8ee0"/></svg>
  <svg class="ml-[26px] w-5 h-5" viewBox="0 0 20 20"><defs><linearGradient id="ed" x1="0" y1="0" x2="1" y2=".4"><stop offset="0" stop-color="#2aa9e8"/><stop offset="1" stop-color="#5ede6b"/></linearGradient></defs><circle cx="10" cy="10" r="10" fill="#1377cf"/><path d="M0 9Q1 0 10 0Q20 1 20 8.500Q19 13 14 13Q11.500 13 12 11Q13.500 6 8 5.500Q2 5.500 0 9Z" fill="url(#ed)"/><path d="M7 9Q6 15 12 17Q15 18 18.500 15.500Q15 20 10 20Q4 18 4.500 13Q5 10 7 9Z" fill="#0c4a92"/><path d="M8.500 9Q12 7 12 10.500Q11 13.500 14 13.300L18 12.500L18.500 15Q15 17 12 15.500Q8 13.500 8.500 9Z" fill="#101010"/></svg>
  <svg class="ml-[26px] w-[19px] h-[17px]" viewBox="0 0 19 17"><path d="M0 0H7L9 2H19V16H0Z" fill="#f5b92e"/><path d="M0 4H19V16H0Z" fill="#ffdc72"/><path d="M4 17V9.500H15V17H12V13H7V17Z" fill="#3b8fdc"/></svg>
  <svg class="ml-[27px] w-5 h-5" viewBox="0 0 20 20"><defs><linearGradient id="ff" x1=".8" y1="0" x2=".3" y2="1"><stop offset="0" stop-color="#ffdf43"/><stop offset=".5" stop-color="#ff8a1e"/><stop offset="1" stop-color="#f0205a"/></linearGradient></defs><path d="M12 0Q15 3 17 5Q21 10 19 15A10 10 0 1 1 1 6L3 2Q4 4 6 4Q9 4 12 0Z" fill="url(#ff)"/><circle cx="10" cy="11.500" r="4.700" fill="#8146d8"/><path d="M4 8Q8 5 12 8Q9 8 8 10Q9 12 12 11.500Q10 15 6 13Z" fill="#ffa024"/></svg>
  <div class="ml-[13px] w-[45px] h-full bg-[#353535] border-b-[3px] border-[#76b9ed] flex items-center justify-center pt-[3px]"><svg class="w-5 h-5"><use href="#chrome"/></svg></div>
  <div class="ml-[14px] relative w-5 h-5"><svg class="w-5 h-5"><use href="#chrome"/></svg><div class="absolute left-[9px] top-[9px] w-3 h-3 rounded-full bg-[#2f8292] text-[8px] leading-3 text-center">A</div></div>
  <div class="ml-[26px] relative w-5 h-5"><svg class="w-5 h-5"><use href="#chrome"/></svg><div class="absolute left-[9px] top-[9px] w-3 h-3 rounded-full bg-[#4e3a38] text-[8px] leading-3 text-center">P</div></div>
  <svg class="ml-[27px] w-[18px] h-5" viewBox="0 0 18 20"><path d="M4.500 0H13.500L15.500 2L18 5L15.500 14L9 20L2.500 14L0 5L2.500 2Z" fill="#fb542b"/><path d="M5 4L9 5L13 4L15 7L12.500 11L13 13L9 16L5 13L5.500 11L3 7Z" fill="#fff"/><path d="M6 8L9 9L12 8L10 11L11 13L9 12L7 13L8 11Z" fill="#fb542b"/></svg>
  <div class="ml-5 w-[35px] h-full border-b-[3px] border-[#76b9ed] flex items-center justify-center pt-[3px]"><svg class="w-5 h-5" viewBox="0 0 20 20"><path d="M14.500 0L20 2.500V17.500L14.500 20L6 11.800L2.300 15L0 13.800V6.200L2.300 5L6 8.200ZM14.500 5.500L9 10L14.500 14.500ZM2 8V12L4 10Z" fill="#23a9f2" fill-rule="evenodd"/><path d="M14.500 0L20 2.500V17.500L14.500 20Z" fill="#1f8fd8"/></svg></div>

  <div class="ml-auto flex items-center text-[15px]">
    <svg class="w-[26px] h-[26px]" viewBox="0 0 26 26"><path d="M8 1Q0 8 2 16T10 25Q5 12 8 1Z" fill="#0e7fa8"/><path d="M9.500 .5Q5 10 8 18T15 26Q11 12 17 1Z" fill="#0d8fb8"/><path d="M18 1Q13 10 14 18T17 25Q27 20 25.500 11T18 1Z" fill="#0b6c94"/></svg>
    <span class="ml-[12px] text-[16px] tracking-[0.4px] text-[#ee3124]">Live</span>
    <svg class="ml-[25px] w-4 h-[9px]" viewBox="0 0 16 9"><path d="M1 8L8 1L15 8" fill="none" stroke="#fff" stroke-width="1.400"/></svg>
    <svg class="ml-[14px] w-[17px] h-5" viewBox="0 0 17 20"><path d="M3 2Q8 -1 13 2M3 18Q8 21 13 18" fill="none" stroke="#fff" stroke-width="1.200"/><rect x="3" y="4.500" width="8" height="11" rx="1.500" fill="none" stroke="#fff" stroke-width="1.400"/><path d="M11 8L15 6.500V13.500L11 12M5.500 8H8.500M5.500 11H8.500" fill="none" stroke="#fff" stroke-width="1.200"/></svg>
    <svg class="ml-[13px] w-[19px] h-[11px]" viewBox="0 0 19 11"><rect x=".6" y=".6" width="16" height="9.800" fill="none" stroke="#fff" stroke-width="1.200"/><path d="M2.500 2.500H9V8.500H2.500ZM17 3.500H19V7.500H17Z" fill="#fff"/></svg>
    <svg class="ml-[9px] w-5 h-[15px]" viewBox="0 0 20 15"><path d="M1 5H4L8.500 1V14L4 10H1ZM13 5L18.500 10.500M18.500 5L13 10.500" fill="none" stroke="#fff" stroke-width="1.300"/></svg>
    <svg class="ml-[13px] w-4 h-4" viewBox="0 0 16 16"><g fill="none" stroke="#fff" stroke-width="1.300"><path d="M1 10.500A11 11 0 0 1 15 3" opacity=".6"/><path d="M4.500 15A12 12 0 0 1 15 6M8.500 15A8 8 0 0 1 15 9.500"/></g><circle cx="13.500" cy="13.500" r="1.800" fill="#fff"/><path d="M1 7A14 14 0 0 1 12 .8" fill="none" stroke="#888"/></svg>
    <svg class="ml-4 w-[21px] h-[18px]" viewBox="0 0 21 18"><path d="M1 14Q7 17 8 12Q4 10 3 13M7 12L15 1.500L19 4.500L10.500 15ZM12 11.500H19Q22 13 15 16.500" fill="none" stroke="#fff" stroke-width="1.300"/></svg>
    <span class="ml-[22px] tracking-[-0.5px]">3:31 PM</span>
    <svg class="ml-7 w-[21px] h-[21px]" viewBox="0 0 21 21"><path d="M1 1.500H20V16H14L10.500 20V16H1Z" fill="none" stroke="#fff" stroke-width="1.400"/></svg>
    <svg class="ml-[26px] mr-7 w-[26px] h-[26px]" viewBox="0 0 26 26"><defs><linearGradient id="cp" x1="0" y1="0" x2="1" y2="1"><stop offset="0" stop-color="#1e8ff0"/><stop offset=".35" stop-color="#3ccf8a"/><stop offset=".55" stop-color="#6a8df0"/><stop offset="1" stop-color="#e5486e"/></linearGradient></defs><path d="M8 1H17Q20 1 21 5L22 8Q26 8 25 13L23 19Q22 24 18 24H9Q6 24 5 20L4 17Q0 17 1 12L3 6Q4 1 8 1ZM11 8L9 17H15L17 8Z" fill="url(#cp)" fill-rule="evenodd"/><rect x="7" y="15" width="19" height="10" rx="2" fill="#1a1a1a"/><text x="9" y="23" font-size="8" font-weight="700" fill="#ffd43b" textLength="15">PRE</text></svg>
  </div>
</div>
</body>
</html>
